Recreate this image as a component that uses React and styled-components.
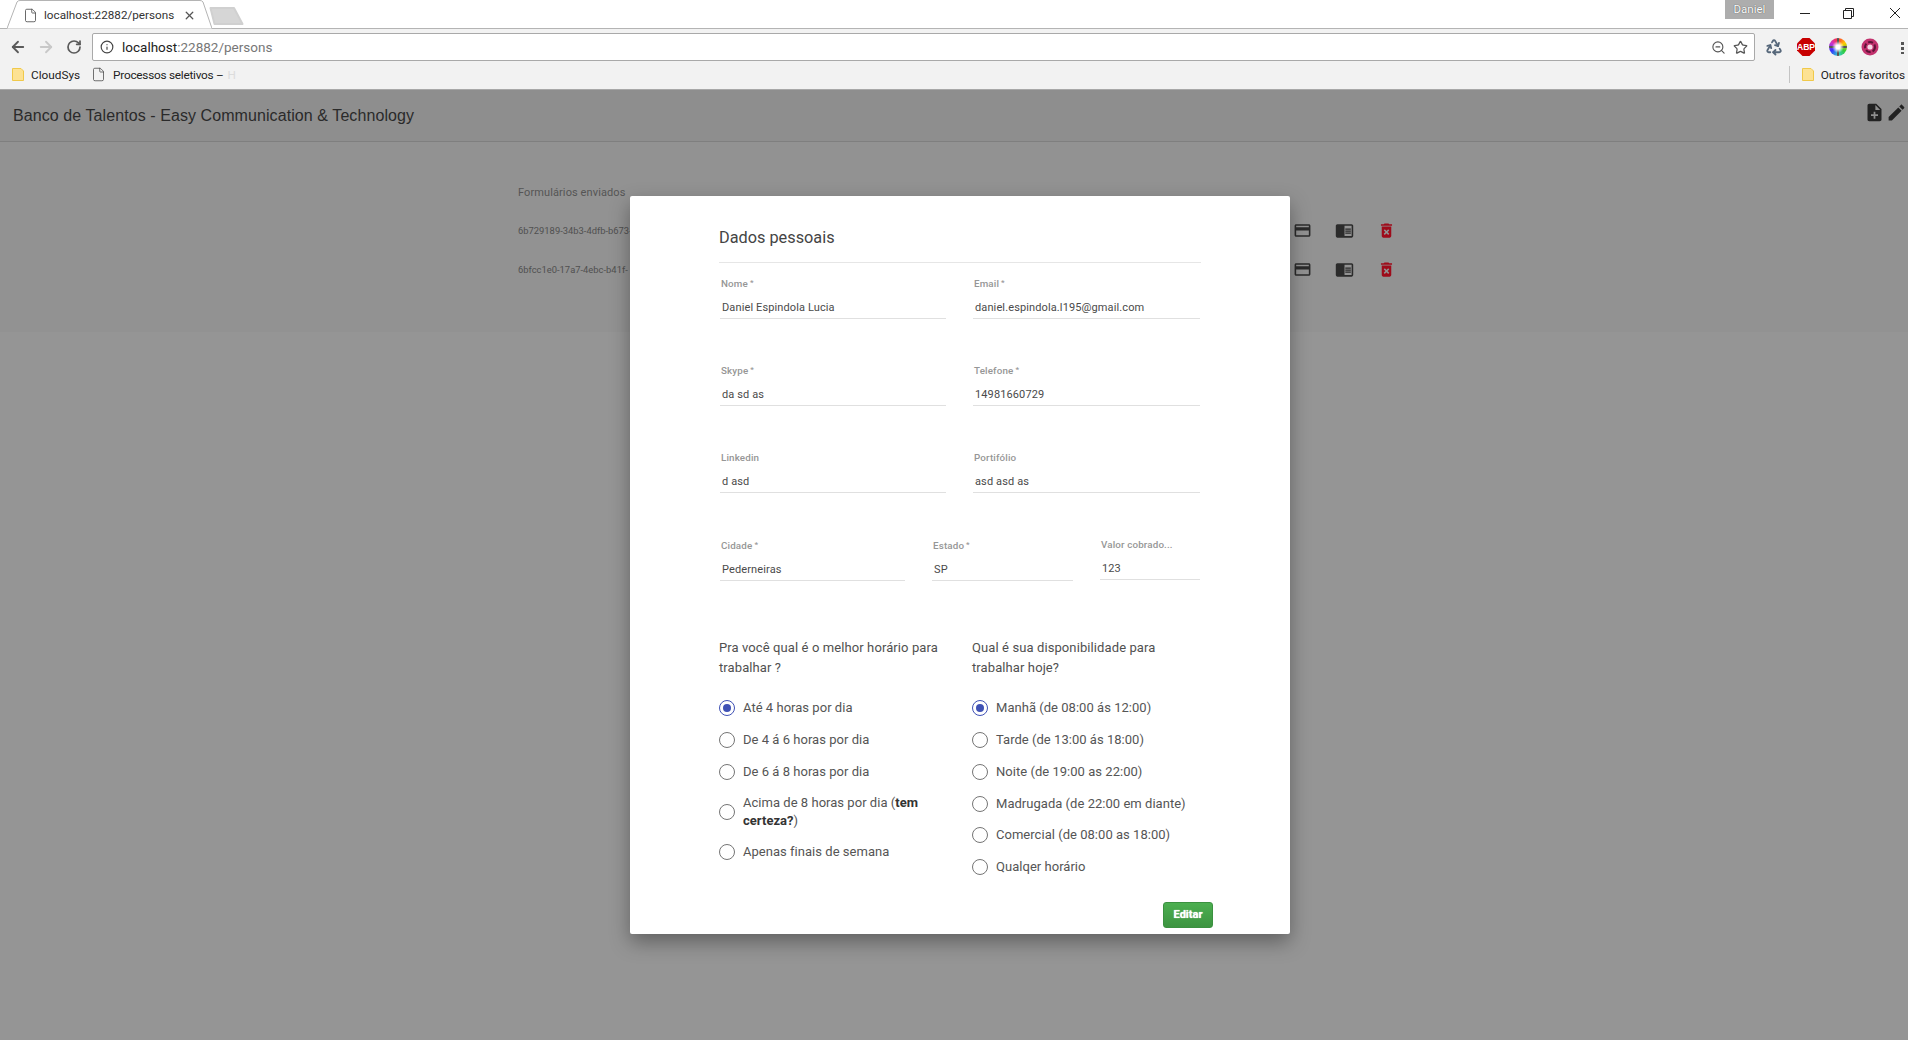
import styled, { createGlobalStyle } from "styled-components";
import { ArrowLeft, ArrowRight, RotateCw, Info, ZoomOut, Star, Recycle, X, File } from "lucide-react";

const GlobalStyle = createGlobalStyle`
  html, body {
    margin: 0;
    padding: 0;
    background: #959595;
    overflow: hidden;
  }
  * {
    box-sizing: border-box;
  }
`;

const Screen = styled.div`
  position: relative;
  width: 1908px;
  height: 1040px;
  overflow: hidden;
  background: #959595;
  font-family: Roboto, "Liberation Sans", sans-serif;
`;

/* browser chrome */
const TabStrip = styled.div`
  height: 29px;
  background: #fff;
  border-bottom: 1px solid #b4b4b4;
  display: flex;
  align-items: flex-start;
  justify-content: space-between;
`;

const TabGroup = styled.div`
  display: flex;
  align-items: flex-end;
  padding-left: 7px;
  height: 29px;
`;

const Tab = styled.div`
  position: relative;
  width: 205px;
  height: 29px;
  display: flex;
  align-items: center;
  padding: 1px 0 0 16px;
  gap: 6px;
  font: 11.7px Roboto, "Open Sans", sans-serif;
  color: #333;
`;

const TabShape = styled.svg`
  position: absolute;
  left: 0;
  top: 0;
`;

const TabTitle = styled.span`
  position: relative;
  width: 133px;
  white-space: nowrap;
`;

const TabClose = styled(X)`
  position: relative;
  color: #555;
`;

const NewTab = styled.svg`
  margin: 0 0 4px -3px;
`;

const WindowArea = styled.div`
  display: flex;
  align-items: flex-start;
  height: 28px;
  padding-right: 7px;
`;

const UserBadge = styled.div`
  width: 49px;
  height: 19px;
  background: #adadad;
  color: #fff;
  text-shadow: 0 0 1px #333;
  font: 11.5px Roboto, sans-serif;
  text-align: center;
  line-height: 18px;
  margin-right: 25px;
`;

const WinButtons = styled.div`
  display: flex;
  gap: 33px;
  padding-top: 7px;
`;

const WinButton = styled.div`
  width: 12px;
  height: 12px;
  display: flex;
  align-items: center;
  justify-content: center;
  margin: 0 ${(p) => (p.$nudge ? 2 : 0)}px 0 ${(p) => (p.$nudge ? -2 : 0)}px;
`;

const Toolbar = styled.div`
  height: 33px;
  padding: 3px 0 0 4px;
  background: #f2f2f2;
  display: flex;
  align-items: center;
`;

const NavButton = styled.div`
  width: 28px;
  display: flex;
  justify-content: center;
  color: ${(p) => (p.$off ? "#c8c8c8" : "#5a5a5a")};
`;

const UrlBox = styled.div`
  width: 1663px;
  height: 28px;
  margin-left: 4px;
  background: #fff;
  border: 1px solid #a9a9a9;
  border-radius: 2px;
  display: flex;
  align-items: center;
  padding: 0 6px 0 7px;
  font: 13.5px Roboto, "Open Sans", sans-serif;
  color: #777;
`;

const UrlHost = styled.span`
  color: #222;
  margin-left: 8px;
`;

const UrlEnd = styled.div`
  margin-left: auto;
  display: flex;
  align-items: center;
  gap: 7px;
  color: #555;
`;

const Extensions = styled.div`
  flex: 1;
  display: flex;
  align-items: center;
  padding-left: 10px;
  gap: 14px;
`;

const ColorWheel = styled.div`
  width: 18px;
  height: 18px;
  border-radius: 50%;
  background:
    radial-gradient(circle, #fff 0 2px, transparent 6px),
    linear-gradient(#555, #555) center / 18px 2px no-repeat,
    linear-gradient(#555, #555) center / 2px 18px no-repeat,
    conic-gradient(#f33, #fc0, #3c3, #3cc, #33f, #c3c, #f33);
`;

const Dots = styled.div`
  width: 3px;
  height: 13px;
  margin-left: 8px;
  background: radial-gradient(circle, #555 1.5px, transparent 2px) 0 0 / 3px 5px;
`;

const Bookmarks = styled.div`
  height: 28px;
  background: #f2f2f2;
  border-bottom: 1px solid #a8a8a8;
  display: flex;
  align-items: center;
  padding: 0 3px 2px 12px;
  font: 11.8px Roboto, "Open Sans", sans-serif;
  color: #222;
`;

const Bookmark = styled.div`
  display: flex;
  align-items: center;
  gap: 7px;
  margin-right: 11px;
  letter-spacing: ${(p) => (p.$tight ? -0.25 : 0)}px;
`;

const FadedEnd = styled.span`
  color: #dcdcdc;
  margin-left: -3px;
`;

const BookmarksEnd = styled.div`
  margin-left: auto;
  height: 17px;
  display: flex;
  align-items: center;
  gap: 7px;
  padding-left: 12px;
  border-left: 1px solid #c4c4c4;
`;

/* page behind the dialog */
const AppBar = styled.header`
  height: 52px;
  background: #8e8e8e;
  border-bottom: 1px solid #7f7f7f;
  display: flex;
  align-items: center;
  justify-content: space-between;
  padding: 1px 1px 0 13px;
  font: 16px "Liberation Sans", sans-serif;
  letter-spacing: 0.08px;
  color: #2a2a2a;
`;

const AppActions = styled.div`
  display: flex;
  align-items: center;
  gap: 1px;
  margin-bottom: 8px;
`;

const Sent = styled.section`
  height: 190px;
  padding: 44px 510px 0 518px;
  background: #929292;
`;

const SentTitle = styled.div`
  font-size: 11px;
  letter-spacing: 0.1px;
  color: #555;
  line-height: 14px;
  margin-bottom: 24px;
`;

const SentRow = styled.div`
  height: 39px;
  display: flex;
  align-items: flex-start;
  justify-content: space-between;
  font-size: 9.4px;
  color: #505050;
  line-height: 14px;
`;

const RowIcons = styled.div`
  display: flex;
  align-items: center;
  gap: 23px;
  margin-top: -3px;
  padding-right: 2px;
`;

/* dialog */
const Modal = styled.div`
  position: absolute;
  left: 630px;
  top: 196px;
  width: 660px;
  height: 738px;
  background: #fff;
  border-radius: 2px;
  box-shadow: 0 8px 20px rgba(0, 0, 0, 0.35);
  padding: 30px 89px 0;
`;

const ModalTitle = styled.h2`
  margin: 0;
  font-size: 16.3px;
  font-weight: 400;
  line-height: 24px;
  height: 37px;
  color: #444;
  border-bottom: 1px solid #e6e6e6;
`;

const FieldRow = styled.div`
  display: flex;
  gap: 27px;
  height: 87.4px;
  padding: 0 1px;
  margin-top: ${(p) => (p.$first ? 13 : 0)}px;
`;

const Field = styled.div`
  width: ${(p) => p.$w}px;
`;

const Label = styled.div`
  font-size: 9.8px;
  font-weight: 500;
  letter-spacing: 0.15px;
  line-height: 14px;
  color: #969696;
  padding-left: 1px;
  white-space: nowrap;
`;

const Required = styled.span`
  font-size: 8px;
  margin-left: 2px;
  vertical-align: 2px;
`;

const Value = styled.div`
  height: 28px;
  padding: 9px 0 0 2px;
  font-size: 11px;
  letter-spacing: 0.12px;
  line-height: 16px;
  color: #4a4a4a;
  border-bottom: 1px solid #e0e0e0;
  white-space: nowrap;
`;

const Questions = styled.div`
  display: grid;
  grid-template-columns: 253px 1fr;
  margin-top: 12.4px;
  height: 264px;
`;

const Question = styled.p`
  margin: 0 0 14px;
  height: 40px;
  width: 228px;
  font-size: 13px;
  letter-spacing: 0.1px;
  line-height: 20px;
  color: #505050;
`;

const Option = styled.label`
  display: flex;
  align-items: center;
  gap: 8px;
  min-height: ${(p) => (p.$tall ? 48.4 : 31.9)}px;
  font-size: 13px;
  letter-spacing: 0.03px;
  line-height: 18px;
  color: #555;
`;

const RadioCircle = styled.span`
  flex: none;
  width: 16px;
  height: 16px;
  border-radius: 50%;
  border: 1px solid ${(p) => (p.$on ? "#3f51b5" : "#757575")};
  display: flex;
  align-items: center;
  justify-content: center;
  &::after {
    content: "";
    width: 8px;
    height: 8px;
    border-radius: 50%;
    background: ${(p) => (p.$on ? "#3f51b5" : "transparent")};
  }
`;

const OptionText = styled.span`
  max-width: 180px;
  strong {
    color: #333;
    font-weight: 700;
  }
`;

const Footer = styled.div`
  display: flex;
  justify-content: flex-end;
  margin-right: -12px;
`;

const EditButton = styled.button`
  width: 50px;
  height: 26px;
  padding: 0;
  border: 1px solid #3b9140;
  border-radius: 3px;
  background: linear-gradient(#4caf50, #3d9441);
  color: #fff;
  text-shadow: 0 0 1px #fff;
  font: 700 11px Roboto, sans-serif;
`;

const FolderIcon = () => (
  <svg width="12" height="13" viewBox="0 0 12 13">
    <path d="M.5.5h8.5l2.5 2.5v9.5H.5z" fill="#fde293" stroke="#f0c94a" />
  </svg>
);

const MdIcon = ({ d, size = 16, color = "#222" }) => (
  <svg width={size} height={size} viewBox="0 0 24 24" fill={color}>
    <path d={d} />
  </svg>
);

const CARD = "M20 4H4c-1.11 0-1.99.89-1.99 2L2 18c0 1.11.89 2 2 2h16c1.11 0 2-.89 2-2V6c0-1.11-.89-2-2-2zm0 14H4v-6h16v6zm0-10H4V6h16v2z";
const READER = "M13 12h7v1.5h-7zm0-2.5h7V11h-7zm0 5h7V16h-7zM21 4H3c-1.1 0-2 .9-2 2v13c0 1.1.9 2 2 2h18c1.1 0 2-.9 2-2V6c0-1.1-.9-2-2-2zm0 15h-9V6h9v13z";
const TRASH = "M6 19c0 1.1.9 2 2 2h8c1.1 0 2-.9 2-2V7H6v12zm2.46-7.12l1.41-1.41L12 12.59l2.12-2.12 1.41 1.41L13.41 14l2.12 2.12-1.41 1.41L12 15.41l-2.12 2.12-1.41-1.41L10.59 14l-2.13-2.12zM15.5 4l-1-1h-5l-1 1H5v2h14V4z";
const NOTE_ADD = "M14 2H6c-1.1 0-1.99.9-1.99 2L4 20c0 1.1.89 2 1.99 2H18c1.1 0 2-.9 2-2V8l-6-6zm2 14h-3v3h-2v-3H8v-2h3v-3h2v3h3v2zm-3-7V3.5L18.5 9H13z";
const EDIT = "M3 17.25V21h3.75L17.81 9.94l-3.75-3.75L3 17.25zM20.71 7.04c.39-.39.39-1.02 0-1.41l-2.34-2.34c-.39-.39-1.02-.39-1.41 0l-1.83 1.83 3.75 3.75 1.83-1.83z";

const sent = ["6b729189-34b3-4dfb-b673-", "6bfcc1e0-17a7-4ebc-b41f-"];

const rows = [
  [["Nome", "Daniel Espindola Lucia", true], ["Email", "daniel.espindola.l195@gmail.com", true]],
  [["Skype", "da sd as", true], ["Telefone", "14981660729", true]],
  [["Linkedin", "d asd"], ["Portifólio", "asd asd as"]],
];

const hours = [
  "Até 4 horas por dia",
  "De 4 á 6 horas por dia",
  "De 6 á 8 horas por dia",
  <>Acima de 8 horas por dia (<strong>tem certeza?</strong>)</>,
  "Apenas finais de semana",
];

const shifts = [
  "Manhã (de 08:00 ás 12:00)",
  "Tarde (de 13:00 ás 18:00)",
  "Noite (de 19:00 as 22:00)",
  "Madrugada (de 22:00 em diante)",
  "Comercial (de 08:00 as 18:00)",
  "Qualqer horário",
];

const App = () => {
  return (
    <Screen>
      <GlobalStyle />
      <TabStrip>
        <TabGroup>
          <Tab>
            <TabShape width="205" height="29" viewBox="0 0 205 29">
              <path d="M0 28.5 L10 2 Q11 .5 13 .5 H193 Q195 .5 196 2 L205 28.5" fill="#fff" stroke="#b4b4b4" />
            </TabShape>
            <File size={15} strokeWidth={1.4} color="#555" style={{ position: "relative" }} />
            <TabTitle>localhost:22882/persons</TabTitle>
            <TabClose size={13} strokeWidth={2.4} />
          </Tab>
          <NewTab width="36" height="18" viewBox="0 0 36 18">
            <path d="M1.5 1 H25 L33.5 17 H5.5 Z" fill="#d6d6d6" stroke="#d0d0d0" strokeWidth="2" strokeLinejoin="round" />
          </NewTab>
        </TabGroup>
        <WindowArea>
          <UserBadge>Daniel</UserBadge>
          <WinButtons>
            <WinButton>
              <svg width="11" height="11" viewBox="0 0 11 11"><path d="M0 5.5h10" stroke="#222" /></svg>
            </WinButton>
            <WinButton $nudge>
              <svg width="11" height="11" viewBox="0 0 11 11" fill="none" stroke="#222"><path d="M.5 2.5h8v8h-8zM2.5 2.5v-2h8v8h-2" /></svg>
            </WinButton>
            <WinButton>
              <svg width="12" height="12" viewBox="0 0 12 12"><path d="M1 1l10 10M11 1L1 11" stroke="#222" /></svg>
            </WinButton>
          </WinButtons>
        </WindowArea>
      </TabStrip>

      <Toolbar>
        <NavButton><ArrowLeft size={18} strokeWidth={2.4} /></NavButton>
        <NavButton $off><ArrowRight size={18} strokeWidth={2.4} /></NavButton>
        <NavButton><RotateCw size={16} strokeWidth={2.6} /></NavButton>
        <UrlBox>
          <Info size={14} strokeWidth={2} color="#444" />
          <UrlHost>localhost</UrlHost>:22882/persons
          <UrlEnd>
            <ZoomOut size={15} strokeWidth={1.8} />
            <Star size={15} strokeWidth={2} />
          </UrlEnd>
        </UrlBox>
        <Extensions>
          <Recycle size={18} color="#56677a" strokeWidth={2.4} />
          <svg width="18" height="18" viewBox="0 0 18 18">
            <path d="M5.5 0h7L18 5.5v7L12.5 18h-7L0 12.5v-7z" fill="#c80000" />
            <text x="9" y="12.2" textAnchor="middle" fontSize="8.6" fontWeight="700" fontFamily="Liberation Sans" fill="#fff">ABP</text>
          </svg>
          <ColorWheel />
          <svg width="18" height="18" viewBox="0 0 18 18">
            <circle cx="9" cy="9" r="8.5" fill="#c2326e" />
            <circle cx="9" cy="9" r="5" fill="none" stroke="#5e1438" strokeWidth="2" strokeDasharray="5 2" />
            <circle cx="9" cy="9" r="2.6" fill="#f6d9e6" />
          </svg>
          <Dots />
        </Extensions>
      </Toolbar>

      <Bookmarks>
        <Bookmark><FolderIcon />CloudSys</Bookmark>
        <Bookmark $tight><File size={15} strokeWidth={1.2} color="#444" />Processos seletivos – <FadedEnd>H</FadedEnd></Bookmark>
        <BookmarksEnd><FolderIcon />Outros favoritos</BookmarksEnd>
      </Bookmarks>

      <AppBar>
        <span>Banco de Talentos - Easy Communication &amp; Technology</span>
        <AppActions>
          <MdIcon d={NOTE_ADD} size={21} color="#222" />
          <MdIcon d={EDIT} size={21} color="#222" />
        </AppActions>
      </AppBar>

      <Sent>
        <SentTitle>Formulários enviados</SentTitle>
        {sent.map((id) => (
          <SentRow key={id}>
            <span>{id}</span>
            <RowIcons>
              <MdIcon d={CARD} size={19} color="#2b2b2b" />
              <MdIcon d={READER} size={19} color="#2b2b2b" />
              <MdIcon d={TRASH} size={19} color="#9e0b1a" />
            </RowIcons>
          </SentRow>
        ))}
      </Sent>

      <Modal>
        <ModalTitle>Dados pessoais</ModalTitle>
        {rows.map((row, i) => (
          <FieldRow key={i} $first={i === 0}>
            {row.map(([label, value, required], j) => (
              <Field key={label} $w={j === 0 ? 226 : 227}>
                <Label>{label}{required && <Required>*</Required>}</Label>
                <Value>{value}</Value>
              </Field>
            ))}
          </FieldRow>
        ))}
        <FieldRow>
          <Field $w={185}><Label>Cidade<Required>*</Required></Label><Value>Pederneiras</Value></Field>
          <Field $w={141}><Label>Estado<Required>*</Required></Label><Value>SP</Value></Field>
          <Field $w={100}><Label>Valor cobrado...</Label><Value>123</Value></Field>
        </FieldRow>
        <Questions>
          <div>
            <Question>Pra você qual é o melhor horário para trabalhar ?</Question>
            {hours.map((text, i) => (
              <Option key={i} $tall={i === 3}>
                <RadioCircle $on={i === 0} />
                <OptionText>{text}</OptionText>
              </Option>
            ))}
          </div>
          <div>
            <Question>Qual é sua disponibilidade para trabalhar hoje?</Question>
            {shifts.map((text, i) => (
              <Option key={i}>
                <RadioCircle $on={i === 0} />
                <span>{text}</span>
              </Option>
            ))}
          </div>
        </Questions>
        <Footer>
          <EditButton>Editar</EditButton>
        </Footer>
      </Modal>
    </Screen>
  );
};

export default App;
